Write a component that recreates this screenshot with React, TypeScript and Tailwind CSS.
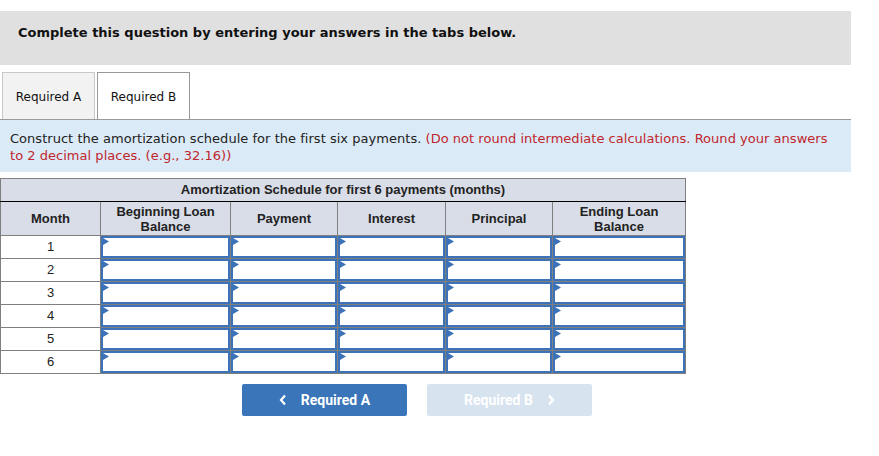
import React from "react";

const cols = [
  { label: ["Month"], w: "w-[100px]" },
  { label: ["Beginning Loan", "Balance"], w: "w-[130px]" },
  { label: ["Payment"], w: "w-[107px]" },
  { label: ["Interest"], w: "w-[108px]" },
  { label: ["Principal"], w: "w-[107px]" },
  { label: ["Ending Loan", "Balance"], w: "w-[133px]" },
];

function InputCell() {
  return (
    <td className="border border-[#7f7f7f] p-0 h-[23px]">
      <div className="relative h-[22px] border-2 border-[#3b72b8] bg-white">
        <svg className="absolute left-0 top-0" width="6" height="7" viewBox="0 0 6 7">
          <polygon points="0,0 6,3.5 0,7" fill="#3b72b8" />
        </svg>
      </div>
    </td>
  );
}

export default function App() {
  return (
    <div className="w-[879px] h-[456px] bg-white pt-[11px]" style={{ fontFamily: "'DejaVu Sans', Verdana, sans-serif" }}>
      <div className="w-[851px] h-[54px] bg-[#e0e0e0] pl-[18px] pt-[14px]">
        <div className="font-bold text-[13px] leading-[16px] text-[#111]">
          Complete this question by entering your answers in the tabs below.
        </div>
      </div>

      <div className="mt-[7px] w-[851px] flex items-end pl-[2px] gap-[2px] border-b border-[#9a9a9a]">
        <div className="w-[93px] h-[47px] border border-b-0 border-[#c8c8c8] bg-[#f2f2f2] flex items-center justify-center pt-[2px] text-[12px] text-[#111]">
          Required A
        </div>
        <div className="w-[93px] h-[47px] border border-b-0 border-[#999] bg-white flex items-center justify-center pt-[2px] text-[12px] text-[#111]">
          Required B
        </div>
      </div>

      <div className="w-[851px] h-[52px] bg-[#dbeaf7] px-[10px] pt-[10px] text-[13px] leading-[17px] text-[#222] tracking-[0.03px]">
        Construct the amortization schedule for the first six payments.{" "}
        <span className="text-[#c0262d]">
          (Do not round intermediate calculations. Round your answers to 2 decimal places. (e.g., 32.16))
        </span>
      </div>

      <table
        className="mt-[6px] border-collapse border border-[#7f7f7f] text-[13px] text-[#222]"
        style={{ fontFamily: "'Liberation Sans', Arial, sans-serif" }}
      >
        <thead>
          <tr className="bg-[#d9dde7]">
            <th colSpan={6} className="h-[23px] border border-[#7f7f7f] border-b-black font-bold text-center leading-[15px] pb-[1px]">
              Amortization Schedule for first 6 payments (months)
            </th>
          </tr>
          <tr className="bg-[#d9dde7]">
            {cols.map((c, i) => (
              <th key={i} className={`${c.w} h-[34px] border border-[#7f7f7f] font-bold text-center leading-[15px] p-0`}>
                {c.label.map((l, j) => (
                  <div key={j}>{l}</div>
                ))}
              </th>
            ))}
          </tr>
        </thead>
        <tbody>
          {[1, 2, 3, 4, 5, 6].map((n) => (
            <tr key={n}>
              <td className="h-[23px] border border-[#7f7f7f] text-center bg-white p-0 pb-[1px] leading-[15px]">{n}</td>
              <InputCell />
              <InputCell />
              <InputCell />
              <InputCell />
              <InputCell />
            </tr>
          ))}
        </tbody>
      </table>

      <div className="mt-[10px] flex gap-[20px] pl-[242px]" style={{ fontFamily: "Roboto, sans-serif" }}>
        <div className="w-[165px] h-[32px] rounded-[2px] bg-[#3a75ba] flex items-center justify-center gap-[14px] text-white font-bold text-[14px]">
          <svg width="8" height="12" viewBox="0 0 8 12">
            <polyline points="6,1.5 2,6 6,10.5" fill="none" stroke="white" strokeWidth="2.2" />
          </svg>
          <span>Required A</span>
        </div>
        <div className="w-[165px] h-[32px] rounded-[2px] bg-[#d8e3f0] flex items-center justify-center gap-[14px] text-white font-bold text-[14px]">
          <span>Required B</span>
          <svg width="8" height="12" viewBox="0 0 8 12">
            <polyline points="2,1.5 6,6 2,10.5" fill="none" stroke="white" strokeWidth="2.2" />
          </svg>
        </div>
      </div>
    </div>
  );
}
